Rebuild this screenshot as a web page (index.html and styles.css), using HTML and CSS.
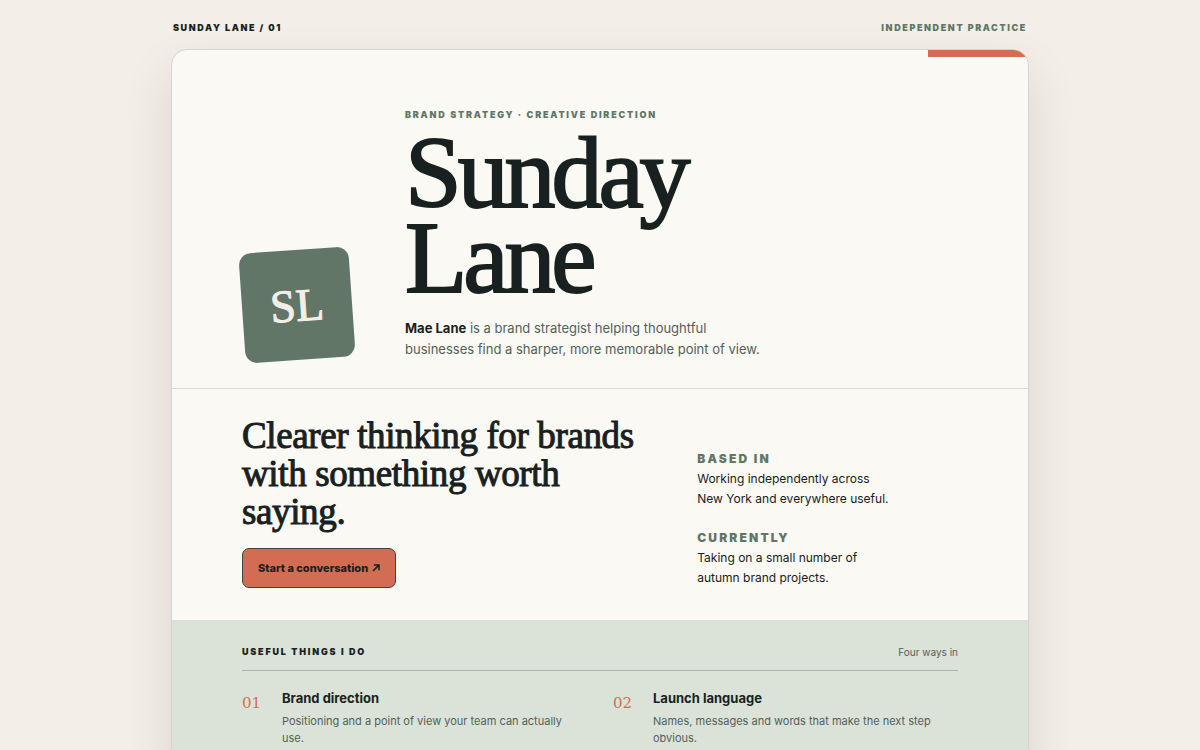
FILE: index.html
```html
<!DOCTYPE html>
<html lang="en">
<head>
<meta charset="utf-8">
<meta name="viewport" content="width=device-width, initial-scale=1">
<title>Sunday Lane</title>
<link rel="stylesheet" href="styles.css">
</head>
<body>
<div class="page">
  <header class="topbar">
    <span>Sunday Lane / 01</span>
    <span class="topbar-note">Independent practice</span>
  </header>
  <main class="card">
    <section class="hero">
      <div class="monogram" aria-hidden="true">SL</div>
      <div class="hero-copy">
        <p class="eyebrow">Brand strategy · Creative direction</p>
        <h1 class="name">Sunday<br>Lane</h1>
        <p class="lede"><strong>Mae Lane</strong> is a brand strategist helping thoughtful businesses find a sharper, more memorable point of view.</p>
      </div>
    </section>
    <section class="intro">
      <div class="pitch">
        <h2 class="headline">Clearer thinking for brands with something worth saying.</h2>
        <a class="cta" href="#contact">Start a conversation
          <svg class="cta-arrow" viewBox="0 0 8 8" aria-hidden="true"><path d="M1 7 6.6 1.4M1.8 1H7V6.2"/></svg>
        </a>
      </div>
      <dl class="facts">
        <div>
          <dt>Based in</dt>
          <dd>Working independently across<br>New York and everywhere useful.</dd>
        </div>
        <div>
          <dt>Currently</dt>
          <dd>Taking on a small number of<br>autumn brand projects.</dd>
        </div>
      </dl>
    </section>
    <section class="services">
      <div class="services-head">
        <h2 class="services-title">Useful things I do</h2>
        <span class="services-note">Four ways in</span>
      </div>
      <div class="service-grid">
        <article class="service">
          <span class="service-number">01</span>
          <div>
            <h3 class="service-name">Brand direction</h3>
            <p class="service-text">Positioning and a point of view your team can actually use.</p>
          </div>
        </article>
        <article class="service">
          <span class="service-number">02</span>
          <div>
            <h3 class="service-name">Launch language</h3>
            <p class="service-text">Names, messages and words that make the next step obvious.</p>
          </div>
        </article>
      </div>
    </section>
  </main>
</div>
</body>
</html>
```
FILE: styles.css
```css
:root {
  --ink: #192120;
  --muted: #52605a;
  --green: #617667;
  --coral: #d26d54;
  --paper: #faf9f4;
  --sand: #f3eee7;
  --sage: #dbe3d8;
  --serif: Georgia, "Liberation Serif", serif;
}

* { box-sizing: border-box; }

body {
  margin: 0;
  background: var(--sand);
  color: var(--ink);
  font-family: Inter, "Liberation Sans", sans-serif;
  -webkit-font-smoothing: antialiased;
}

h1, h2, h3, p, dl, dd { margin: 0; }

.page {
  width: calc(100% - 32px);
  max-width: 858px;
  margin: 0 auto;
  padding: 21px 0 48px;
}

.topbar {
  display: flex;
  justify-content: space-between;
  padding: 0 2px;
  margin-bottom: 14px;
  font-size: 9px;
  line-height: 14px;
  font-weight: 900;
  letter-spacing: 0.18em;
  text-transform: uppercase;
}

.topbar-note { color: var(--green); }

.card {
  position: relative;
  overflow: hidden;
  border: 1px solid #d3d6cf;
  border-radius: 16px;
  background: var(--paper);
  box-shadow: 0 22px 50px rgba(45, 40, 30, 0.12);
}

.card::before {
  content: "";
  position: absolute;
  top: 0;
  right: 0;
  width: 100px;
  height: 7px;
  background: var(--coral);
}

.hero {
  display: grid;
  grid-template-columns: 110px 1fr;
  gap: 53px;
  align-items: end;
  padding: 57px 70px 28px;
  border-bottom: 1px solid #d9dbd4;
}

.monogram {
  display: grid;
  place-items: center;
  height: 110px;
  border-radius: 12px;
  background: var(--green);
  color: var(--sand);
  font-family: var(--serif);
  font-size: 46px;
  -webkit-text-stroke: 1px currentColor;
  transform: rotate(-4deg);
}

.eyebrow {
  margin-bottom: 7px;
  color: var(--green);
  font-size: 9px;
  line-height: 16px;
  font-weight: 900;
  letter-spacing: 0.2em;
  text-transform: uppercase;
}

.name {
  margin-bottom: 18px;
  font-family: var(--serif);
  font-size: 102px;
  line-height: 85px;
  font-weight: 400;
  letter-spacing: -0.04em;
  -webkit-text-stroke: 2px currentColor;
}

.lede {
  max-width: 370px;
  color: var(--muted);
  font-size: 13px;
  line-height: 21px;
}

.lede strong { color: var(--ink); font-weight: 700; }

.intro {
  display: grid;
  grid-template-columns: 20fr 13fr;
  gap: 54px;
  align-items: end;
  padding: 28px 70px 32px;
}

.headline {
  margin-bottom: 17px;
  font-family: var(--serif);
  font-size: 37px;
  line-height: 38px;
  font-weight: 400;
  letter-spacing: -0.01em;
  -webkit-text-stroke: 1px currentColor;
}

.cta {
  display: inline-flex;
  align-items: center;
  gap: 4px;
  padding: 10px 15px;
  border: 1px solid #3e4543;
  border-radius: 7px;
  background: var(--coral);
  color: var(--ink);
  font-size: 11px;
  line-height: 18px;
  font-weight: 800;
  text-decoration: none;
  vertical-align: top;
}

.cta-arrow {
  width: 8px;
  height: 8px;
  fill: none;
  stroke: currentColor;
  stroke-width: 1.6;
}

.facts {
  display: grid;
  gap: 19px;
  font-size: 12px;
  line-height: 20px;
}

.facts dt {
  color: var(--green);
  font-weight: 900;
  letter-spacing: 0.18em;
  text-transform: uppercase;
}

.services {
  padding: 24px 70px 40px;
  background: var(--sage);
}

.services-head {
  display: flex;
  justify-content: space-between;
  padding-bottom: 10px;
  border-bottom: 1px solid #aab4ab;
  line-height: 16px;
}

.services-title {
  font-size: 9px;
  font-weight: 900;
  letter-spacing: 0.2em;
  text-transform: uppercase;
}

.services-note { color: var(--muted); font-size: 10px; }

.service-grid {
  display: grid;
  grid-template-columns: 1fr 1fr;
  gap: 26px;
  padding-top: 17px;
}

.service {
  display: grid;
  grid-template-columns: 26px 1fr;
  gap: 14px;
}

.service-number {
  padding-top: 5px;
  color: var(--coral);
  font-family: "DejaVu Serif", serif;
  font-size: 15px;
  line-height: 20px;
}

.service-name {
  margin-bottom: 5px;
  font-size: 13px;
  line-height: 20px;
  font-weight: 700;
}

.service-text {
  max-width: 300px;
  color: var(--muted);
  font-size: 11px;
  line-height: 17px;
}
```
